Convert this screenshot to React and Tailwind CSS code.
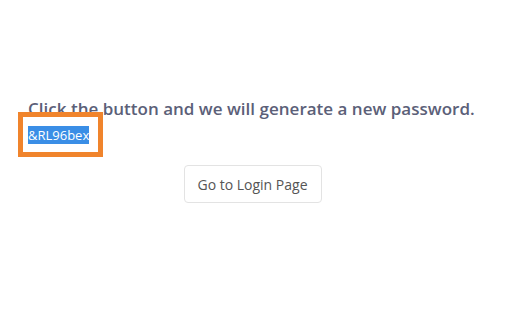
import React from 'react';

const App = () => {
  const password = '&RL96bex';

  return (
    <div className="min-h-[336px] bg-white px-[28px] pt-[97px]" style={{ fontFamily: '"Open Sans", "Liberation Sans", sans-serif' }}>
      <h1 className="whitespace-nowrap text-[17px] font-semibold leading-[24px] tracking-[0.01px] text-[#5b6078]">
        Click the button and we will generate a new password.
      </h1>
      <div className="relative mt-[1px] inline-block">
        <span className="bg-[#3a8ee6] text-[13px] leading-[18px] text-white inline-block">{password}</span>
        {/* annotation frame */}
        <div className="absolute -left-[10px] -top-[10px] -right-[14px] -bottom-[11px] border-[5px] border-[#f0842c]" />
      </div>
      <div className="mt-[19px] flex justify-center pr-[4px]">
        <button className="h-[38px] w-[138px] rounded-[4px] border border-[#e3e3e3] bg-white text-[14px] text-[#555]">
          Go to Login Page
        </button>
      </div>
    </div>
  );
};

export default App;
